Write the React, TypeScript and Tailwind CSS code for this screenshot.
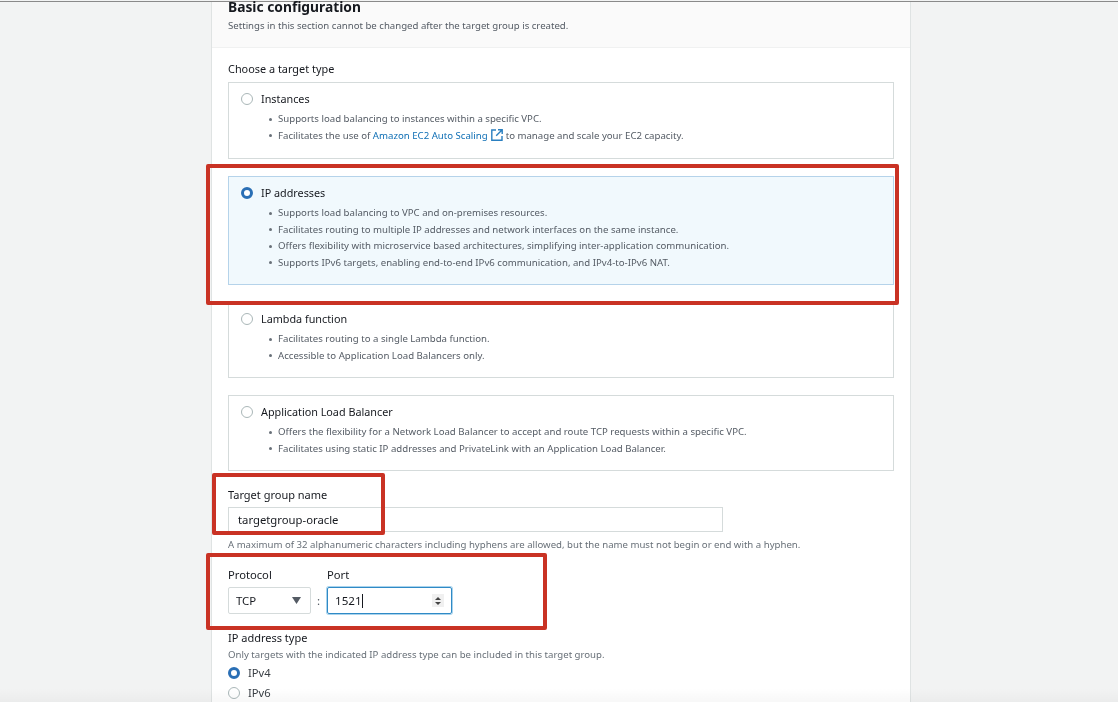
function Radio({ checked }: { checked?: boolean }) {
  if (checked) {
    return <span className="block w-3 h-3 shrink-0 rounded-full border-[3.5px] border-[#2a6fb5] bg-white" />
  }
  return <span className="block w-3 h-3 shrink-0 rounded-full border border-[#aab7b8] bg-white" />
}

function ExternalIcon() {
  return (
    <svg className="inline-block mx-[3px] -mt-[2px]" width="12" height="12" viewBox="0 0 12 12" fill="none" stroke="#2a7fc0" strokeWidth="1.4">
      <path d="M5 1H.8v10.2H11V7" />
      <path d="M7 .8h4.2V5M11 1 5.2 6.8" />
    </svg>
  )
}

function Bullets({ items }: { items: React.ReactNode[] }) {
  return (
    <ul className="mt-[4px] ml-[49px]">
      {items.map((item, i) => (
        <li key={i} className="flex h-[16.5px] items-center text-[9.65px] text-[#545b64]">
          <span className="w-[3px] h-[3px] rounded-full bg-[#687078] mr-[6px] shrink-0 -ml-[9px]" />
          <span>{item}</span>
        </li>
      ))}
    </ul>
  )
}

function TargetCard({
  title,
  items,
  height,
  checked,
}: {
  title: string
  items: React.ReactNode[]
  height: string
  checked?: boolean
}) {
  return (
    <div className={`border ${height} ${checked ? "border-[#b5d3ea] bg-[#f1f9fd]" : "border-[#d5dbdb] bg-white"}`}>
      <div className="flex items-center gap-[8px] ml-[12px] mt-[8px] h-[16px]">
        <Radio checked={checked} />
        <span className="text-[#16191f] text-[10.8px]">{title}</span>
      </div>
      <Bullets items={items} />
    </div>
  )
}

export default function App() {
  return (
    <div
      className="relative w-[1118px] h-[702px] overflow-hidden bg-[#f2f3f3] text-[9.62px] leading-[16px] text-[#16191f] blur-[0.35px]"
      style={{ fontFamily: '"Noto Sans", sans-serif' }}
    >
      <div className="h-px mt-px bg-[#8a8a8a]" />

      <div className="ml-[211px] w-[700px] h-[700px] bg-white border-x border-[#dfe3e3]">
        {/* Header */}
        <div className="h-[46px] bg-[#fafafa] border-b border-[#f0f1f1] pl-[16px]">
          <h2 className="h-[10px] text-[13.8px] leading-[10px] font-bold text-[#16191f]">Basic configuration</h2>
          <p className="mt-[6px] text-[#545b64]">Settings in this section cannot be changed after the target group is created.</p>
        </div>

        <div className="px-[16px]">
          <p className="mt-[13px] h-[18px] text-[10.9px] text-[#16191f]">Choose a target type</p>

          <TargetCard
            title="Instances"
            height="h-[77px] mt-[3px]"
            items={[
              "Supports load balancing to instances within a specific VPC.",
              <>
                Facilitates the use of <span className="text-[#0f6fb5]">Amazon EC2 Auto Scaling</span>
                <ExternalIcon />
                to manage and scale your EC2 capacity.
              </>,
            ]}
          />

          <TargetCard
            checked
            title="IP addresses"
            height="h-[109px] mt-[17px]"
            items={[
              "Supports load balancing to VPC and on-premises resources.",
              "Facilitates routing to multiple IP addresses and network interfaces on the same instance.",
              "Offers flexibility with microservice based architectures, simplifying inter-application communication.",
              "Supports IPv6 targets, enabling end-to-end IPv6 communication, and IPv4-to-IPv6 NAT.",
            ]}
          />

          <TargetCard
            title="Lambda function"
            height="h-[76px] mt-[17px]"
            items={[
              "Facilitates routing to a single Lambda function.",
              "Accessible to Application Load Balancers only.",
            ]}
          />

          <TargetCard
            title="Application Load Balancer"
            height="h-[76px] mt-[17px]"
            items={[
              "Offers the flexibility for a Network Load Balancer to accept and route TCP requests within a specific VPC.",
              "Facilitates using static IP addresses and PrivateLink with an Application Load Balancer.",
            ]}
          />

          {/* Target group name */}
          <p className="mt-[16px] h-[17px] text-[11px]">Target group name</p>
          <div className="mt-[3px] w-[495px] h-[25px] border border-[#d5dbdb] flex items-center pl-[9px] text-[11.3px]">
            targetgroup-oracle
          </div>
          <p className="mt-[5px] h-[16px] text-[#687078]">
            A maximum of 32 alphanumeric characters including hyphens are allowed, but the name must not begin or end with a hyphen.
          </p>

          {/* Protocol and port */}
          <div className="flex mt-[14px]">
            <div className="w-[99px]">
              <p className="h-[18px] text-[11.2px]">Protocol</p>
              <div className="mt-[2px] w-[83px] h-[27px] border border-[#d5dbdb] rounded-[2px] flex items-center justify-between pl-[7px] pr-[9px] text-[11.4px]">
                TCP
                <svg width="9" height="7" viewBox="0 0 9 7"><path d="M0 0h9L4.5 7z" fill="#545b64" /></svg>
              </div>
            </div>
            <div>
              <p className="h-[18px] text-[11.2px]">Port</p>
              <div className="relative mt-[2px] w-[125px] h-[27px] border border-[#2f8ac6] rounded-[2px] shadow-[0_0_0_1px_#a9d3ec] flex items-center pl-[7px] text-[11.6px]">
                <span className="absolute -left-[11px] text-[#545b64]">:</span>
                1521<span className="w-px h-[14px] bg-[#16191f]" />
                <span className="absolute right-[7px] top-[6px] w-[12px] h-[13px] bg-[#f0f0f0] flex flex-col items-center justify-center gap-[2px]">
                  <svg width="6" height="3" viewBox="0 0 6 3"><path d="M0 3h6L3 0z" fill="#444" /></svg>
                  <svg width="6" height="3" viewBox="0 0 6 3"><path d="M0 0h6L3 3z" fill="#444" /></svg>
                </span>
              </div>
            </div>
          </div>

          {/* IP address type */}
          <p className="mt-[17px] h-[13px] leading-[13px] text-[11px]">IP address type</p>
          <p className="mt-[3px] h-[15px] text-[#687078]">Only targets with the indicated IP address type can be included in this target group.</p>
          <div className="flex items-center gap-[8px] mt-px h-[20px] text-[11.2px] text-[#3a3f45]">
            <Radio checked />
            IPv4
          </div>
          <div className="flex items-center gap-[8px] h-[20px] text-[11.2px] text-[#3a3f45]">
            <Radio />
            IPv6
          </div>
        </div>
      </div>

      {/* Red annotation boxes */}
      <div className="absolute left-[206px] top-[164px] w-[693px] h-[141px] border-[4px] border-[#c93224] rounded-[2px]" />
      <div className="absolute left-[212px] top-[473px] w-[173px] h-[62px] border-[4px] border-[#c93224] rounded-[2px]" />
      <div className="absolute left-[206px] top-[553px] w-[341px] h-[77px] border-[4px] border-[#c93224] rounded-[2px]" />

      {/* Fade at the bottom edge of the capture */}
      <div className="absolute left-0 right-0 bottom-0 h-[14px] bg-gradient-to-b from-transparent to-black/[0.03]" />
    </div>
  )
}
